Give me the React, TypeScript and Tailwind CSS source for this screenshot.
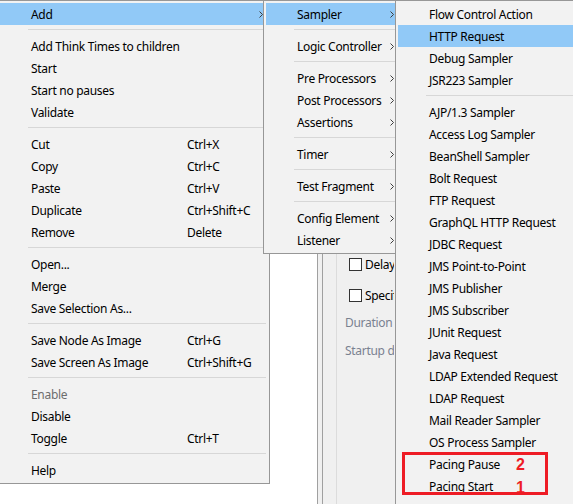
import React from "react";

type Item =
  | "sep"
  | { label: string; shortcut?: string; sub?: boolean; active?: boolean; disabled?: boolean };

const mainItems: Item[] = [
  { label: "Add", sub: true, active: true },
  "sep",
  { label: "Add Think Times to children" },
  { label: "Start" },
  { label: "Start no pauses" },
  { label: "Validate" },
  "sep",
  { label: "Cut", shortcut: "Ctrl+X" },
  { label: "Copy", shortcut: "Ctrl+C" },
  { label: "Paste", shortcut: "Ctrl+V" },
  { label: "Duplicate", shortcut: "Ctrl+Shift+C" },
  { label: "Remove", shortcut: "Delete" },
  "sep",
  { label: "Open..." },
  { label: "Merge" },
  { label: "Save Selection As..." },
  "sep",
  { label: "Save Node As Image", shortcut: "Ctrl+G" },
  { label: "Save Screen As Image", shortcut: "Ctrl+Shift+G" },
  "sep",
  { label: "Enable", disabled: true },
  { label: "Disable" },
  { label: "Toggle", shortcut: "Ctrl+T" },
  "sep",
  { label: "Help" },
];

const addItems: Item[] = [
  { label: "Sampler", sub: true, active: true },
  "sep",
  { label: "Logic Controller", sub: true },
  "sep",
  { label: "Pre Processors", sub: true },
  { label: "Post Processors", sub: true },
  { label: "Assertions", sub: true },
  "sep",
  { label: "Timer", sub: true },
  "sep",
  { label: "Test Fragment", sub: true },
  "sep",
  { label: "Config Element", sub: true },
  { label: "Listener", sub: true },
];

const samplerItems: Item[] = [
  { label: "Flow Control Action" },
  { label: "HTTP Request", active: true },
  { label: "Debug Sampler" },
  { label: "JSR223 Sampler" },
  "sep",
  ...[
    "AJP/1.3 Sampler",
    "Access Log Sampler",
    "BeanShell Sampler",
    "Bolt Request",
    "FTP Request",
    "GraphQL HTTP Request",
    "JDBC Request",
    "JMS Point-to-Point",
    "JMS Publisher",
    "JMS Subscriber",
    "JUnit Request",
    "Java Request",
    "LDAP Extended Request",
    "LDAP Request",
    "Mail Reader Sampler",
    "OS Process Sampler",
    "Pacing Pause",
    "Pacing Start",
  ].map((label) => ({ label })),
];

const Arrow = () => (
  <svg width="4" height="7" viewBox="0 0 4 7" className="absolute right-[4px] top-[8px]">
    <path d="M0.5 0.5 L3.5 3.5 L0.5 6.5" fill="none" stroke="#3c3c3c" strokeWidth="1" />
  </svg>
);

const Menu = ({ items, className }: { items: Item[]; className: string }) => (
  <div className={`absolute flex flex-col bg-[#f2f2f2] border border-[#979797] p-[2px] ${className}`}>
    {items.map((it, i) =>
      it === "sep" ? (
        <div key={i} className="h-[10px] pt-[4px] pl-[28px] pr-[1px]">
          <div className="h-px bg-[#d7d7d7]" />
        </div>
      ) : (
        <div
          key={i}
          className={`relative flex h-[22px] items-center pl-[31px] pt-[1px] whitespace-nowrap ${
            it.active ? "bg-[#91c9f7]" : ""
          } ${it.disabled ? "text-[#6d6d6d]" : "text-black"}`}
        >
          <span className="w-[156px] shrink-0">{it.label}</span>
          {it.shortcut && <span>{it.shortcut}</span>}
          {it.sub && <Arrow />}
        </div>
      )
    )}
  </div>
);

const Check = ({ label }: { label: string }) => (
  <div className="flex h-[13px] items-center ml-[4px]">
    <div className="w-[13px] h-[13px] border border-[#333333] bg-white shrink-0" />
    <span className="ml-[3px] text-black">{label}</span>
  </div>
);

export default function App() {
  return (
    <div className="relative w-[573px] h-[504px] overflow-hidden bg-white font-['Noto_Sans',sans-serif] text-[12px] tracking-[-0.3px] leading-none">
      {/* JMeter window behind the popup */}
      <div className="flex h-full">
        <div className="w-[317px] bg-white" />
        <div className="w-px bg-[#a0a0a0]" />
        <div className="w-[4px] bg-[#f0f0f0]" />
        <div className="w-px bg-[#a0a0a0]" />
        <div className="flex-1 bg-[#f0f0f0] pl-[13px]">
          <div className="w-[58px] h-full overflow-hidden border-l border-[#dcdcdc] pl-[8px] pt-[258px] whitespace-nowrap">
            <Check label="Delay" />
            <div className="mt-[18px]">
              <Check label="Specif" />
            </div>
            <div className="mt-[13px] h-[16px] flex items-center text-[#7a8190]">Duration (</div>
            <div className="mt-[12px] h-[16px] flex items-center text-[#7a8190]">Startup de</div>
          </div>
        </div>
      </div>

      <Menu items={mainItems} className="left-[-3px] top-0 w-[273px]" />
      <Menu items={addItems} className="left-[263px] top-0 w-[138px]" />
      <Menu items={samplerItems} className="left-[395px] top-0 w-[200px] pb-[40px]" />

      {/* annotation */}
      <div className="absolute left-[402px] top-[452px] w-[146px] h-[43px] border-[3px] border-[#ee1c25]" />
      <span className="absolute left-[516px] top-[457px] font-['Liberation_Sans',sans-serif] font-bold text-[16px] text-[#ee1c25]">
        2
      </span>
      <span className="absolute left-[516px] top-[480px] font-['Liberation_Sans',sans-serif] font-bold text-[16px] text-[#ee1c25]">
        1
      </span>
    </div>
  );
}
